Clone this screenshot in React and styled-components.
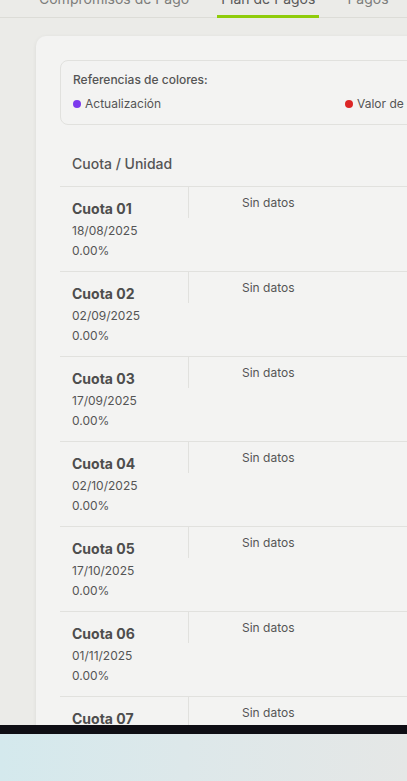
import React from "react";
import styled, { createGlobalStyle } from "styled-components";

const Global = createGlobalStyle`
  html, body { margin: 0; padding: 0; }
  body {
    font-family: Inter, "Noto Sans", "Liberation Sans", sans-serif;
    background: #ebebe8;
    overflow: hidden;
  }
  * { box-sizing: border-box; }
`;

const Frame = styled.div`
  width: 407px;
  height: 781px;
  display: flex;
  flex-direction: column;
  overflow: hidden;
`;

const Screen = styled.div`
  height: 725px;
  flex: none;
  overflow: hidden;
  background: #ebebe8;
`;

const TaskBar = styled.div`
  height: 9px;
  flex: none;
  background: #0e0e14;
`;

const Desktop = styled.div`
  flex: 1;
  background: linear-gradient(90deg, #d4e9ed 0%, #dde8ea 45%, #e5e7e6 100%);
`;

const TabBar = styled.div`
  height: 18px;
  display: flex;
  align-items: flex-end;
  gap: 24px;
  padding-left: 35px;
  border-bottom: 1px solid #dcdcd7;
  width: 600px;
`;

const Tab = styled.div`
  flex: none;
  padding: 0 4px 6px;
  margin-bottom: -1px;
  font-size: 14px;
  line-height: 20px;
  white-space: nowrap;
  color: ${(p) => (p.$active ? "#5a5a5a" : "#7d7d7b")};
  border-bottom: 3px solid ${(p) => (p.$active ? "#8fcc0a" : "transparent")};
`;

const Card = styled.div`
  margin: 18px 0 0 36px;
  width: 700px;
  background: #f3f3f2;
  border-radius: 10px;
  box-shadow: 0 1px 4px rgba(0, 0, 0, 0.07);
  padding: 24px 0 0 24px;
`;

const Legend = styled.div`
  border: 1px solid #e1e1de;
  border-radius: 8px;
  padding: 11px 12px 12px;
  display: flex;
  flex-direction: column;
  gap: 8px;
`;

const LegendTitle = styled.div`
  font-size: 12px;
  line-height: 16px;
  font-weight: 500;
  color: #555;
`;

const LegendItems = styled.div`
  display: grid;
  grid-template-columns: repeat(2, 272px);
`;

const LegendItem = styled.div`
  display: flex;
  align-items: center;
  gap: 4px;
  font-size: 12px;
  line-height: 16px;
  color: #555;
`;

const Dot = styled.span`
  width: 8px;
  height: 8px;
  border-radius: 50%;
  background: ${(p) => p.$color};
  flex: none;
`;

const Table = styled.div`
  margin-top: 16px;
`;

const HeaderCell = styled.div`
  padding: 12px;
  font-size: 14px;
  line-height: 21px;
  font-weight: 500;
  color: #555;
`;

const Row = styled.div`
  display: flex;
  border-top: 1px solid #e1e1de;
  height: 85px;
`;

const LeftCell = styled.div`
  width: 128px;
  flex: none;
  padding: 12px 12px 10px;
  display: flex;
  flex-direction: column;
`;

const Divider = styled.div`
  width: 1px;
  height: 31px;
  background: #e1e1de;
  flex: none;
`;

const RightCell = styled.div`
  padding: 6px 0 0 53px;
  font-size: 12px;
  line-height: 20px;
  color: #555;
`;

const CuotaName = styled.div`
  font-size: 14px;
  line-height: 20px;
  font-weight: 700;
  color: #4d4d4d;
  margin-bottom: 2px;
`;

const SubText = styled.div`
  font-size: 12px;
  line-height: 20px;
  color: #555;
`;

const rows = [
  ["01", "18/08/2025"],
  ["02", "02/09/2025"],
  ["03", "17/09/2025"],
  ["04", "02/10/2025"],
  ["05", "17/10/2025"],
  ["06", "01/11/2025"],
  ["07", "16/11/2025"],
  ["08", "01/12/2025"],
];

export default function App() {
  return (
    <>
      <Global />
      <Frame>
        <Screen>
          <TabBar>
            <Tab>Compromisos de Pago</Tab>
            <Tab $active>Plan de Pagos</Tab>
            <Tab>Pagos</Tab>
          </TabBar>
          <Card>
            <Legend>
              <LegendTitle>Referencias de colores:</LegendTitle>
              <LegendItems>
                <LegendItem>
                  <Dot $color="#7c3aed" />
                  Actualización
                </LegendItem>
                <LegendItem>
                  <Dot $color="#dc2626" />
                  Valor de cuota
                </LegendItem>
              </LegendItems>
            </Legend>
            <Table>
              <HeaderCell>Cuota / Unidad</HeaderCell>
              {rows.map(([n, d]) => (
                <Row key={n}>
                  <LeftCell>
                    <CuotaName>Cuota {n}</CuotaName>
                    <SubText>{d}</SubText>
                    <SubText>0.00%</SubText>
                  </LeftCell>
                  <Divider />
                  <RightCell>Sin datos</RightCell>
                </Row>
              ))}
            </Table>
          </Card>
        </Screen>
        <TaskBar />
        <Desktop />
      </Frame>
    </>
  );
}
